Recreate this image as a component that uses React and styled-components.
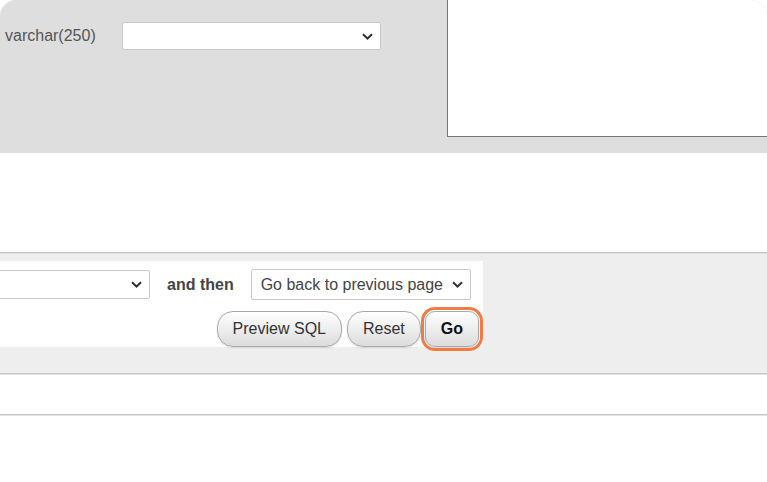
import React from "react";
import styled, { createGlobalStyle } from "styled-components";

const GlobalStyle = createGlobalStyle`
    html, body {
        margin: 0;
        padding: 0;
        background: #ffffff;
    }
    body {
        font-family: "Liberation Sans", Arial, sans-serif;
    }
`

const Frame = styled.div`
    width: 767px;
    height: 482px;
    box-sizing: border-box;
    border-radius: 16px;
    overflow: hidden;
    background: #ffffff;
    display: flex;
    flex-direction: column;
`

const TopSection = styled.div`
    height: 153px;
    flex: none;
    background: #dedede;
    display: flex;
    align-items: flex-start;
`

const FieldRow = styled.div`
    display: flex;
    align-items: center;
    padding: 22px 0 0 5px;
`

const TypeLabel = styled.span`
    font-size: 16px;
    color: #555555;
    width: 117px;
`

const SelectBox = styled.div`
    box-sizing: border-box;
    width: ${props => props.width}px;
    height: ${props => props.height || 28}px;
    margin-left: ${props => props.offset || 0}px;
    background: #ffffff;
    border: 1px solid #c9c9c9;
    border-radius: 2px;
    display: flex;
    align-items: center;
    justify-content: space-between;
    padding: 0 7px 0 9px;
    font-size: 16px;
    color: #444444;
    flex: none;
`

const ValueArea = styled.div`
    box-sizing: border-box;
    margin-left: 66px;
    margin-top: -1px;
    width: 340px;
    height: 138px;
    background: #ffffff;
    border: 1px solid #777777;
    flex: none;
`

const Spacer = styled.div`
    height: ${props => props.height}px;
    flex: none;
    background: ${props => props.bg || "#ffffff"};
`

const Divider = styled.div`
    height: 1px;
    flex: none;
    background: #c6c6c6;
    border-bottom: 1px solid #e2e2e2;
`

const ActionSection = styled.div`
    flex: none;
    background: #eeeeee;
    padding: 7px 0 26px;
`

const ActionPanel = styled.div`
    width: 483px;
    height: 86px;
    box-sizing: border-box;
    background: #ffffff;
    padding: 8px 4px 0 0;
    display: flex;
    flex-direction: column;
    gap: 11px;
`

const ActionRow = styled.div`
    display: flex;
    align-items: center;
`

const AndThen = styled.span`
    font-size: 16px;
    font-weight: bold;
    color: #444444;
    margin: 0 17px;
`

const ButtonRow = styled.div`
    display: flex;
    justify-content: flex-end;
    gap: 5px;
`

const Button = styled.button`
    height: 36px;
    padding: 0 15px;
    font-family: "Liberation Sans", Arial, sans-serif;
    font-size: 16px;
    font-weight: ${props => (props.primary ? "bold" : "normal")};
    color: ${props => (props.primary ? "#111111" : "#333333")};
    background: linear-gradient(#ffffff, #dcdcdc);
    border: 1px solid #a9a9a9;
    border-radius: ${props => (props.primary ? "10px" : "16px")};
    box-shadow: 0 1px 2px rgba(0, 0, 0, 0.12);
    outline: ${props => (props.primary ? "3px solid #f47a45" : "none")};
    outline-offset: 1px;
    margin-left: ${props => (props.primary ? "-1px" : "0")};
`

const Chevron = () => (
    <svg width="11" height="7" viewBox="0 0 11 7">
        <path d="M1 1.2 L5.5 5.5 L10 1.2" fill="none" stroke="#333" strokeWidth="2" />
    </svg>
)

const App = () => {
    return (
        <>
            <GlobalStyle />
            <Frame>
                <TopSection>
                    <FieldRow>
                        <TypeLabel>varchar(250)</TypeLabel>
                        <SelectBox width={259}>
                            <span />
                            <Chevron />
                        </SelectBox>
                    </FieldRow>
                    <ValueArea />
                </TopSection>

                <Spacer height={99} />
                <Divider />

                <ActionSection>
                    <ActionPanel>
                        <ActionRow>
                            <SelectBox width={171} height={29} offset={-21}>
                                <span />
                                <Chevron />
                            </SelectBox>
                            <AndThen>and then</AndThen>
                            <SelectBox width={220} height={31}>
                                <span>Go back to previous page</span>
                                <Chevron />
                            </SelectBox>
                        </ActionRow>
                        <ButtonRow>
                            <Button>Preview SQL</Button>
                            <Button>Reset</Button>
                            <Button primary>Go</Button>
                        </ButtonRow>
                    </ActionPanel>
                </ActionSection>

                <Divider />
                <Spacer height={39} />
                <Divider />
            </Frame>
        </>
    );
}

export default App
